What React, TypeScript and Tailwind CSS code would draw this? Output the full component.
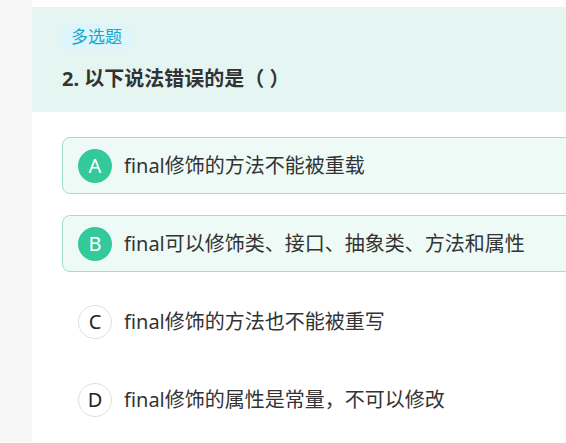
const options = [
  { key: "A", text: "final修饰的方法不能被重载", selected: true },
  { key: "B", text: "final可以修饰类、接口、抽象类、方法和属性", selected: true },
  { key: "C", text: "final修饰的方法也不能被重写", selected: false },
  { key: "D", text: "final修饰的属性是常量，不可以修改", selected: false },
];

const font = { fontFamily: '"Noto Sans", "Noto Sans CJK SC", sans-serif' };

const App = () => {
  return (
    <div className="flex w-[566px] h-[443px] overflow-hidden bg-white text-[#333]" style={font}>
      <div className="w-[32px] shrink-0 bg-[#f7f7f7]"></div>

      <div className="w-[600px] shrink-0 bg-white pt-[7px]">
        <div className="h-[105px] bg-[#e5f6f2] px-[30px] pt-[17px]">
          <span className="inline-flex items-center h-[26px] px-[9px] rounded bg-[#dcf6fb] text-[17px] text-[#1ba6cb]">
            多选题
          </span>
          <div className="mt-[16px] text-[20px] font-bold leading-[26px] text-[#333]">2. 以下说法错误的是（ ）</div>
        </div>

        <div className="flex flex-col gap-[21px] pt-[25px] pl-[30px] pr-[20px]">
          {options.map((o) => (
            <div
              key={o.key}
              className={
                o.selected
                  ? "flex items-center h-[57px] px-[15px] rounded-lg border border-[#9ee2ca] bg-[#eefaf6]"
                  : "flex items-center h-[57px] px-[15px] rounded-lg border border-transparent"
              }
            >
              <div
                className={
                  o.selected
                    ? "flex items-center justify-center w-[34px] h-[34px] rounded-full bg-[#33c99a] text-white text-[20px]"
                    : "flex items-center justify-center w-[34px] h-[34px] rounded-full border border-[#e0e0e0] bg-white text-[#222] text-[20px]"
                }
              >
                {o.key}
              </div>
              <span className="ml-[12px] text-[20px] text-[#333]">{o.text}</span>
            </div>
          ))}
        </div>
      </div>
    </div>
  );
};

export default App;
